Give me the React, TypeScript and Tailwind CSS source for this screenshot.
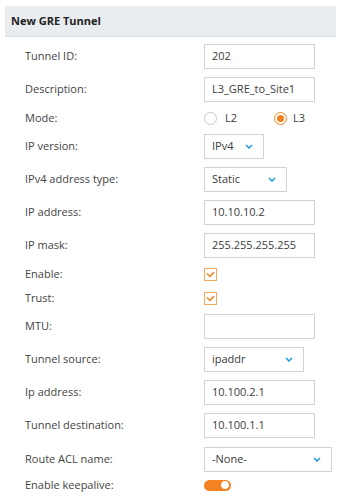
const font = { fontFamily: '"Open Sans", "Liberation Sans", sans-serif' };

const Chevron = () => (
  <svg width="8" height="5" viewBox="0 0 8 5" className="shrink-0">
    <path d="M1 1l3 3 3-3" fill="none" stroke="#1e9be0" strokeWidth="1.5" />
  </svg>
);

const TextBox = ({ value, w = "w-[111px]" }: { value: string; w?: string }) => (
  <div className={`${w} h-[25px] border border-[#d2d2d2] bg-white flex items-center px-[7px] text-[11px] text-[#3c3c3c]`}>
    {value}
  </div>
);

const Select = ({ value, w }: { value: string; w: string }) => (
  <div className={`${w} h-[25px] border border-[#d2d2d2] bg-white flex items-center justify-between pl-[7px] pr-[10px] text-[11px] text-[#3c3c3c]`}>
    <span>{value}</span>
    <Chevron />
  </div>
);

const Radio = ({ checked }: { checked?: boolean }) =>
  checked ? (
    <span className="w-[13px] h-[13px] rounded-full border border-[#f58220] flex items-center justify-center">
      <span className="w-[7px] h-[7px] rounded-full bg-[#f58220]" />
    </span>
  ) : (
    <span className="w-[13px] h-[13px] rounded-full border border-[#c8c8c8] bg-white" />
  );

const Check = () => (
  <span className="w-[13px] h-[13px] border border-[#f7a85a] bg-white flex items-center justify-center">
    <svg width="9" height="7" viewBox="0 0 9 7">
      <path d="M1 2.5l3 3L8 1" fill="none" stroke="#f58220" strokeWidth="1.5" />
    </svg>
  </span>
);

const Row = ({ label, h, children }: { label: string; h: string; children: React.ReactNode }) => (
  <div className={`flex items-center ${h}`}>
    <div className="w-[179px] shrink-0 text-[11px] text-[#444]">{label}</div>
    <div className="flex items-center">{children}</div>
  </div>
);

export default function App() {
  return (
    <div className="w-[344px] h-[504px] bg-white pl-[5px] pr-[8px] pt-[6px] overflow-hidden" style={font}>
      <div className="h-[31px] bg-[#eaedf0] border-b border-[#dde1e5] flex items-center pl-[6px]">
        <span className="text-[11px] font-bold text-[#222]">New GRE Tunnel</span>
      </div>
      <div className="flex flex-col gap-2 pl-[20px] pt-[7px]">
        <Row label="Tunnel ID:" h="h-[25px]">
          <TextBox value="202" />
        </Row>
        <Row label="Description:" h="h-[25px]">
          <TextBox value="L3_GRE_to_Site1" />
        </Row>
        <Row label="Mode:" h="h-[16px]">
          <div className="flex items-center text-[11px] text-[#3c3c3c]">
            <Radio />
            <span className="ml-[8px] w-[49px]">L2</span>
            <Radio checked />
            <span className="ml-[6px]">L3</span>
          </div>
        </Row>
        <Row label="IP version:" h="h-[25px]">
          <Select value="IPv4" w="w-[60px]" />
        </Row>
        <Row label="IPv4 address type:" h="h-[25px]">
          <Select value="Static" w="w-[83px]" />
        </Row>
        <Row label="IP address:" h="h-[25px]">
          <TextBox value="10.10.10.2" />
        </Row>
        <Row label="IP mask:" h="h-[25px]">
          <TextBox value="255.255.255.255" />
        </Row>
        <Row label="Enable:" h="h-[16px]">
          <Check />
        </Row>
        <Row label="Trust:" h="h-[16px]">
          <Check />
        </Row>
        <Row label="MTU:" h="h-[25px]">
          <TextBox value="" />
        </Row>
        <Row label="Tunnel source:" h="h-[25px]">
          <Select value="ipaddr" w="w-[100px]" />
        </Row>
        <Row label="Ip address:" h="h-[25px]">
          <TextBox value="10.100.2.1" />
        </Row>
        <Row label="Tunnel destination:" h="h-[25px]">
          <TextBox value="10.100.1.1" />
        </Row>
        <Row label="Route ACL name:" h="h-[26px]">
          <Select value="-None-" w="w-[128px]" />
        </Row>
        <Row label="Enable keepalive:" h="h-[10px]">
          <span className="w-[27px] h-[11px] rounded-full bg-[#f58220] flex items-center justify-end pr-[1px]">
            <span className="w-[10px] h-[10px] rounded-full bg-white border-[1.5px] border-[#f58220]" />
          </span>
        </Row>
      </div>
    </div>
  );
}
